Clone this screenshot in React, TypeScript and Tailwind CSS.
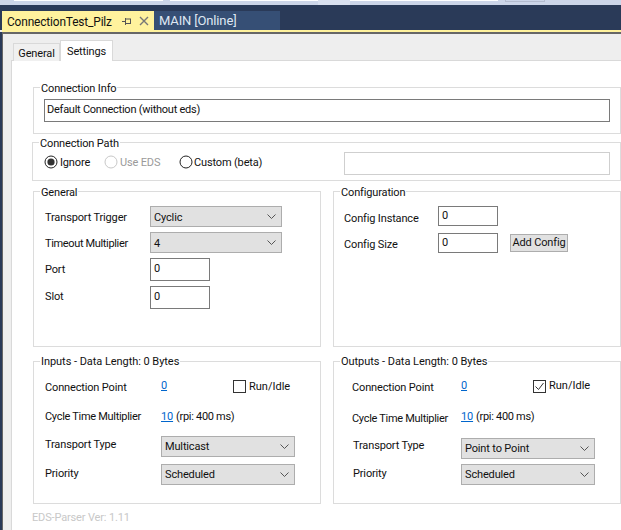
import React from "react";

const Chevron = () => (
  <svg width="9" height="5" viewBox="0 0 9 5" className="shrink-0" fill="none">
    <path d="M0.5 0.5 L4.5 4.5 L8.5 0.5" stroke="#555" strokeWidth="1" />
  </svg>
);

function Select({ value, w, textClass = "" }: { value: string; w: string; textClass?: string }) {
  return (
    <div className={`${w} h-[21px] pl-[3px] pr-[5px] flex items-center justify-between bg-[#e1e1e1] border border-[#adadad] text-[#111]`}>
      <span className={textClass}>{value}</span>
      <Chevron />
    </div>
  );
}

function Input({ value, h = "h-[23px]", pad = "" }: { value: string; h?: string; pad?: string }) {
  return <div className={`w-[60px] ${h} pl-[3px] ${pad} border border-[#7a7a7a] bg-white text-[#111]`}>{value}</div>;
}

function Group({ title, className, titleClass = "-top-[7px]", children }: { title: string; className: string; titleClass?: string; children?: React.ReactNode }) {
  return (
    <div className={`relative border border-[#dcdcdc] ${className}`}>
      <span className={`absolute left-[6px] bg-white px-px leading-[15px] text-[#111] ${titleClass}`}>{title}</span>
      {children}
    </div>
  );
}

function Row({ label, labelW, className = "", children }: { label: string; labelW: string; className?: string; children?: React.ReactNode }) {
  return (
    <div className={`flex ${className}`}>
      <span className={`${labelW} text-[#111]`}>{label}</span>
      {children}
    </div>
  );
}

const Radio = ({ on, disabled }: { on?: boolean; disabled?: boolean }) => (
  <svg width="14" height="14" viewBox="0 0 14 14" className="shrink-0">
    <circle cx="7" cy="7" r="6" fill="#fff" stroke={disabled ? "#c8c8c8" : "#222"} strokeWidth="1" />
    {on && <circle cx="7" cy="7" r="3.6" fill="#333" />}
  </svg>
);

export default function App() {
  return (
    <div className="w-[621px] h-[530px] overflow-hidden whitespace-nowrap bg-[#eeeeee] text-[11px] tracking-[-0.15px] leading-[16px] text-[#111] flex flex-col" style={{ fontFamily: 'Roboto, "Open Sans", sans-serif' }}>
      {/* top strip */}
      <div className="h-[5px] bg-[#ccd5e8] flex shrink-0">
        <div className="w-[14px]" />
        <div className="w-[149px] h-[1px] bg-white" />
        <div className="w-[7px]" />
        <div className="w-[148px] h-[1px] bg-white" />
        <div className="w-[32px] bg-[#d8dfee]" />
        <div className="w-[148px] h-[1px] bg-white" />
        <div className="w-[7px]" />
        <div className="w-[40px] h-[2px] border-b border-x border-[#b4bccf]" />
      </div>
      {/* document tabs */}
      <div className="h-[25px] bg-[#2a3a58] flex items-end pl-[2px] shrink-0">
        <div className="w-[152px] h-[19px] bg-[#fff29d] flex items-center pl-[5px] text-[11.9px] text-[#111]">
          <span className="w-[115px] pt-[2px]">ConnectionTest_Pilz</span>
          <svg width="10" height="10" viewBox="0 0 10 10" fill="none" stroke="#555" strokeWidth="1">
            <path d="M0 5.5 H3 M3.5 2 V9 M3.5 3 H9 M3.5 7.5 H9 M8.5 3 V7.5" />
          </svg>
          <svg className="ml-[7px]" width="10" height="10" viewBox="0 0 10 10" fill="none" stroke="#777" strokeWidth="1.4">
            <path d="M1 1 L9 9 M9 1 L1 9" />
          </svg>
        </div>
        <div className="w-[126px] h-[19px] bg-[#364f75] flex items-center pl-[5px] text-[13px] text-[#dfe7f2]">MAIN [Online]</div>
      </div>
      <div className="h-[2px] bg-[#fff29d] ml-[2px] shrink-0" />
      <div className="flex-1 flex min-h-0">
        <div className="w-[2px] bg-[#2a3a58] shrink-0" />
        <div className="flex-1 flex flex-col border-t-2 border-l border-[#666] min-w-0">
          {/* property tabs */}
          <div className="h-[27px] ml-[8px] flex items-end shrink-0 border-b border-[#d9d9d9]">
            <div className="ml-[2px] w-[47px] h-[18px] pt-[2px] -mb-px bg-[#f0f0f0] border border-b-0 border-[#d9d9d9] flex items-center justify-center text-[#111]">General</div>
            <div className="w-[53px] h-[21px] pt-[2px] -mb-px bg-white border border-b-0 border-[#d9d9d9] flex items-center justify-center text-[#111] z-10">Settings</div>
          </div>
          <div className="flex-1 ml-[8px] bg-white border-l border-[#d9d9d9] pl-[21px]">
            {/* Connection Info */}
            <Group title="Connection Info" className="mt-[26px] w-[588px] h-[47px] pl-[10px] pt-[11px]">
              <div className="w-[566px] h-[23px] pl-[2px] pt-[2px] border border-[#7a7a7a] bg-white text-[#111] tracking-[-0.25px]">Default Connection (without eds)</div>
            </Group>
            {/* Connection Path */}
            <Group title="Connection Path" className="mt-[8px] -ml-px w-[589px] h-[39px] pl-[11px] pt-[9px]">
              <div className="flex items-center h-[20px] text-[#111]">
                <Radio on />
                <span className="ml-[2px] w-[44px] pt-[2px]">Ignore</span>
                <Radio disabled />
                <span className="ml-[2px] w-[59px] pt-[2px] text-[#9a9a9a]">Use EDS</span>
                <Radio />
                <span className="ml-[1px] w-[150px] pt-[2px]">Custom (beta)</span>
                <div className="w-[266px] h-[23px] self-start border border-[#cfcfcf] bg-white" />
              </div>
            </Group>
            <div className="flex mt-[10px]">
              <Group title="General" className="w-[288px] h-[156px] pl-[11px] pt-[14px] shrink-0">
                <Row label="Transport Trigger" labelW="w-[105px] pt-[4px]">
                  <Select value="Cyclic" w="w-[132px]" textClass="pt-[2px]" />
                </Row>
                <Row label="Timeout Multiplier" labelW="w-[105px] pt-[4px] tracking-[-0.35px]" className="mt-[5px]">
                  <Select value="4" w="w-[132px]" textClass="pt-[2px]" />
                </Row>
                <Row label="Port" labelW="w-[105px] pt-[4px]" className="mt-[5px]">
                  <Input value="0" pad="pt-[2px]" />
                </Row>
                <Row label="Slot" labelW="w-[105px] pt-[3px]" className="mt-[5px]">
                  <Input value="0" pad="pt-[2px]" />
                </Row>
              </Group>
              <Group title="Configuration" className="ml-[12px] w-[288px] h-[156px] pl-[10px] pt-[14px] shrink-0">
                <Row label="Config Instance" labelW="w-[94px] pt-[5px]">
                  <Input value="0" h="h-[20px]" pad="pt-px" />
                </Row>
                <Row label="Config Size" labelW="w-[94px] pt-[4px]" className="mt-[6px]">
                  <Input value="0" h="h-[20px]" pad="pt-px" />
                  <div className="ml-[12px] mt-px w-[58px] h-[18px] border border-[#adadad] bg-[#e1e1e1] flex items-center justify-center text-[#111]">Add Config</div>
                </Row>
              </Group>
            </div>
            <div className="flex mt-[14px]">
              <Group title="Inputs - Data Length: 0 Bytes" titleClass="-top-[8px] tracking-[-0.05px]" className="w-[288px] h-[143px] pl-[11px] pt-[12px] shrink-0">
                <div className="flex items-start h-[35px]">
                  <span className="w-[116px] pt-[6px]">Connection Point</span>
                  <span className="w-[72px] pt-[4px] text-[#0066cc] underline">0</span>
                  <span className="w-[13px] h-[13px] border border-[#333] bg-white mt-[6px] mr-[3px]" />
                  <span className="pt-[5px] tracking-normal">Run/Idle</span>
                </div>
                <div className="flex h-[27px]">
                  <span className="w-[116px] tracking-[-0.3px]">Cycle Time Multiplier</span>
                  <span className="text-[#0066cc] underline">10</span>
                  <span className="ml-[3px] tracking-[-0.3px]">(rpi: 400 ms)</span>
                </div>
                <Row label="Transport Type" labelW="w-[116px] pt-[1px]">
                  <Select value="Multicast" w="w-[134px]" />
                </Row>
                <Row label="Priority" labelW="w-[116px] pt-[2px]" className="mt-[7px]">
                  <Select value="Scheduled" w="w-[134px]" />
                </Row>
              </Group>
              <Group title="Outputs - Data Length: 0 Bytes" titleClass="-top-[8px] tracking-[-0.05px]" className="ml-[12px] w-[288px] h-[143px] pl-[18px] pt-[12px] shrink-0">
                <div className="flex items-start h-[35px]">
                  <span className="w-[109px] pt-[6px]">Connection Point</span>
                  <span className="w-[72px] pt-[4px] text-[#0066cc] underline">0</span>
                  <span className="w-[13px] h-[13px] border border-[#333] bg-white mt-[6px] mr-[3px] flex items-center justify-center">
                    <svg width="11" height="11" viewBox="0 0 11 11" fill="none" stroke="#333" strokeWidth="1"><path d="M1.5 5.5 L4.5 8.5 L9.5 2" /></svg>
                  </span>
                  <span className="pt-[4px] tracking-normal">Run/Idle</span>
                </div>
                <div className="flex h-[29px]">
                  <span className="w-[109px] pt-[2px] tracking-[-0.3px]">Cycle Time Multiplier</span>
                  <span className="text-[#0066cc] underline">10</span>
                  <span className="ml-[3px] tracking-[-0.3px]">(rpi: 400 ms)</span>
                </div>
                <Row label="Transport Type" labelW="w-[109px] pl-px">
                  <Select value="Point to Point" w="w-[134px]" />
                </Row>
                <Row label="Priority" labelW="w-[109px] pt-[2px] pl-px" className="mt-[5px]">
                  <Select value="Scheduled" w="w-[134px]" />
                </Row>
              </Group>
            </div>
            <div className="mt-[6px] -ml-px text-[#c8c8c8]">EDS-Parser Ver: 1.11</div>
          </div>
        </div>
      </div>
    </div>
  );
}
